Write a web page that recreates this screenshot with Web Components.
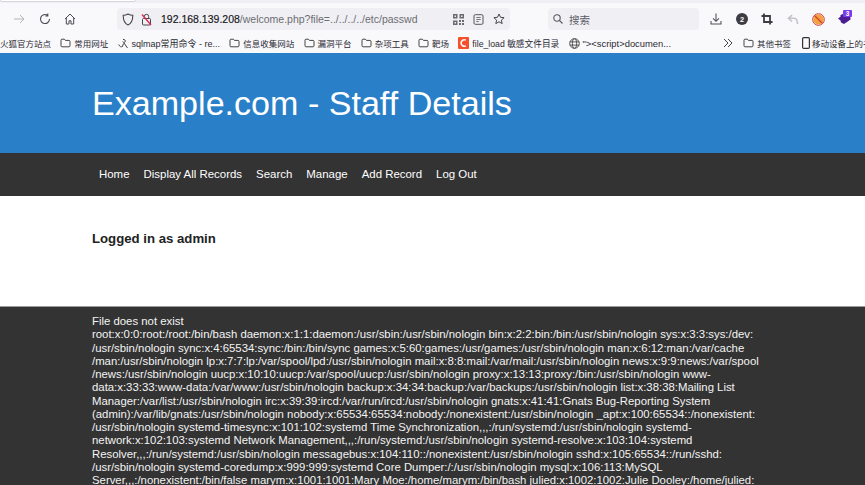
<!DOCTYPE html>
<html lang="zh">
<head>
<meta charset="utf-8">
<title>Example.com - Staff Details</title>
<style>
  html, body { margin: 0; height: 100%; overflow: hidden; background: #fff; }
  body { font-family: "Liberation Sans", Arial, sans-serif; }
</style>
</head>
<body>
<browser-toolbar></browser-toolbar>
<bookmark-bar>
  <bookmark-item data-icon="none">火狐官方站点</bookmark-item>
  <bookmark-item data-icon="folder">常用网址</bookmark-item>
  <bookmark-item data-icon="fox" style="font-size:9px">sqlmap常用命令 - re...</bookmark-item>
  <bookmark-item data-icon="folder">信息收集网站</bookmark-item>
  <bookmark-item data-icon="folder">漏洞平台</bookmark-item>
  <bookmark-item data-icon="folder">杂项工具</bookmark-item>
  <bookmark-item data-icon="folder">靶场</bookmark-item>
  <bookmark-item data-icon="csdn" style="font-size:8.7px">file_load 敏感文件目录</bookmark-item>
  <bookmark-item data-icon="globe" style="font-size:9.4px">"&gt;&lt;script&gt;documen...</bookmark-item>
  <bookmark-item data-icon="chevrons" slot="end" style="margin-right:10px"></bookmark-item>
  <bookmark-item data-icon="folder" slot="end" style="margin-right:11px">其他书签</bookmark-item>
  <bookmark-item data-icon="phone" slot="end" style="gap:2px">移动设备上的书签</bookmark-item>
</bookmark-bar>
<site-header>Example.com - Staff Details</site-header>
<site-nav>
  <a href="#">Home</a>
  <a href="#">Display All Records</a>
  <a href="#">Search</a>
  <a href="#">Manage</a>
  <a href="#">Add Record</a>
  <a href="#">Log Out</a>
</site-nav>
<site-main>Logged in as admin</site-main>
<site-footer>File does not exist<br>root:x:0:0:root:/root:/bin/bash daemon:x:1:1:daemon:/usr/sbin:/usr/sbin/nologin bin:x:2:2:bin:/bin:/usr/sbin/nologin sys:x:3:3:sys:/dev:<br>/usr/sbin/nologin sync:x:4:65534:sync:/bin:/bin/sync games:x:5:60:games:/usr/games:/usr/sbin/nologin man:x:6:12:man:/var/cache<br>/man:/usr/sbin/nologin lp:x:7:7:lp:/var/spool/lpd:/usr/sbin/nologin mail:x:8:8:mail:/var/mail:/usr/sbin/nologin news:x:9:9:news:/var/spool<br>/news:/usr/sbin/nologin uucp:x:10:10:uucp:/var/spool/uucp:/usr/sbin/nologin proxy:x:13:13:proxy:/bin:/usr/sbin/nologin www-<br>data:x:33:33:www-data:/var/www:/usr/sbin/nologin backup:x:34:34:backup:/var/backups:/usr/sbin/nologin list:x:38:38:Mailing List<br>Manager:/var/list:/usr/sbin/nologin irc:x:39:39:ircd:/var/run/ircd:/usr/sbin/nologin gnats:x:41:41:Gnats Bug-Reporting System<br>(admin):/var/lib/gnats:/usr/sbin/nologin nobody:x:65534:65534:nobody:/nonexistent:/usr/sbin/nologin _apt:x:100:65534::/nonexistent:<br>/usr/sbin/nologin systemd-timesync:x:101:102:systemd Time Synchronization,,,:/run/systemd:/usr/sbin/nologin systemd-<br>network:x:102:103:systemd Network Management,,,:/run/systemd:/usr/sbin/nologin systemd-resolve:x:103:104:systemd<br>Resolver,,,:/run/systemd:/usr/sbin/nologin messagebus:x:104:110::/nonexistent:/usr/sbin/nologin sshd:x:105:65534::/run/sshd:<br>/usr/sbin/nologin systemd-coredump:x:999:999:systemd Core Dumper:/:/usr/sbin/nologin mysql:x:106:113:MySQL<br>Server,,,:/nonexistent:/bin/false marym:x:1001:1001:Mary Moe:/home/marym:/bin/bash julied:x:1002:1002:Julie Dooley:/home/julied:</site-footer>

<script>
const ICONS = {
  none: '',
  folder: '<svg width="11" height="10" viewBox="0 0 11 10"><path d="M1 2.2c0-.6.4-1 1-1h2.400l1 1.200H9c.6 0 1 .4 1 1v4.400c0 .6-.4 1-1 1H2c-.6 0-1-.4-1-1z" fill="none" stroke="#444" stroke-width="1"/></svg>',
  fox: '<svg width="11" height="11" viewBox="0 0 11 11"><path d="M.8 6.500c.6 2 2.400 3 4 1.800M5 1.500C6.500 1 8 2.500 7 4 6.300 5 5 4.500 4.800 3.500M6 5l3.500 5M5.500 5.500L4.500 8.300" fill="none" stroke="#444" stroke-width="1"/></svg>',
  csdn: '<svg width="11" height="12" viewBox="0 0 11 12"><rect width="11" height="12" rx="1" fill="#f4512c"/><path d="M7.800 3.200A3.200 3.200 0 1 0 7.800 8.800" fill="none" stroke="#fff" stroke-width="1.500"/></svg>',
  globe: '<svg width="11" height="11" viewBox="0 0 11 11" fill="none" stroke="#444" stroke-width=".9"><circle cx="5.500" cy="5.500" r="4.800"/><ellipse cx="5.500" cy="5.500" rx="2.100" ry="4.800"/><path d="M.9 3.900h9.200M.9 7.100h9.200"/></svg>',
  chevrons: '<svg width="10" height="10" viewBox="0 0 10 10" fill="none" stroke="#444" stroke-width="1"><path d="M1 1l4 4-4 4M5 1l4 4-4 4"/></svg>',
  phone: '<svg width="8" height="12" viewBox="0 0 8 12"><rect x=".6" y=".6" width="6.800" height="10.800" rx="1.200" fill="none" stroke="#333" stroke-width="1.200"/></svg>'
};

class BrowserToolbar extends HTMLElement {
  constructor() {
    super();
    this.attachShadow({ mode: 'open' });
    this.shadowRoot.innerHTML = `
      <style>
        :host { display: block; background: #f9f9fb; height: 33px; box-sizing: border-box; padding-top: 3px; position: relative; overflow: hidden; }
        .tabs { position: absolute; left: 0; right: 0; top: 0; height: 3px; background: #f0f0f4; }
        .tabs::before { content: ""; position: absolute; left: 0; top: -2px; width: 136px; height: 4px; background: #fff; border: 1px solid #d8d8dc; border-radius: 3px; box-sizing: border-box; }
        .row { display: flex; align-items: center; height: 30px; padding-top: 2px; box-sizing: border-box; }
        svg { display: block; flex: none; }
        .nav { display: flex; align-items: center; margin-left: 13px; }
        .url { display: flex; align-items: center; width: 393px; height: 22px; margin-left: 41px; background: #f0f0f4; border-radius: 4px; }
        .addr { margin-left: 9px; font: 10.5px/22px "Liberation Sans", "Noto Sans CJK SC", sans-serif; color: #15141a; white-space: nowrap; -webkit-text-stroke: .15px #15141a; }
        .addr span { color: #6c6c72; -webkit-text-stroke: 0; }
        .url-end { margin-left: auto; display: flex; gap: 9px; align-items: center; margin-right: 5px; }
        .search { display: flex; align-items: center; width: 151px; height: 22px; margin-left: 38px; background: #f0f0f4; border-radius: 4px; box-sizing: border-box; padding-left: 5px; font: 10.5px "Noto Sans CJK SC", sans-serif; color: #5b5b66; gap: 6px; }
        .tools { display: flex; align-items: center; margin-left: 11px; }
      </style>
      <div class="tabs"></div>
      <div class="row">
        <div class="nav">
          <svg width="12" height="12" viewBox="0 0 12 12" fill="none" stroke="#b4b4b8" stroke-width="1"><path d="M1 6h10M7 2l4 4-4 4"/></svg>
          <svg style="margin-left:14px" width="12" height="12" viewBox="0 0 12 12" fill="none" stroke="#4a4a50" stroke-width="1.100"><path d="M10.500 6a4.500 4.500 0 1 1-2-3.700M8.800 .6v2.400h-2.400"/></svg>
          <svg style="margin-left:13px" width="12" height="12" viewBox="0 0 12 12" fill="none" stroke="#4a4a50" stroke-width="1"><path d="M1 6l5-5 5 5M2.300 5v6h2.700V7.800h2V11h2.700V5"/></svg>
        </div>
        <div class="url">
          <svg style="margin-left:5px" width="12" height="13" viewBox="0 0 12 13" fill="none" stroke="#45454b" stroke-width="1.100"><path d="M6 1c1.500 1 3 1.300 4.800 1.300C10.800 7 9.500 10.500 6 12 2.500 10.500 1.200 7 1.200 2.300 3 2.300 4.500 2 6 1z"/></svg>
          <svg style="margin-left:7px" width="11" height="13" viewBox="0 0 11 13"><rect x="1.500" y="5.500" width="8" height="6.500" rx="1" fill="none" stroke="#45454b"/><path d="M3.300 5.500V3.500a2.200 2.200 0 0 1 4.400 0v2" fill="none" stroke="#45454b"/><path d="M1 1.500l9 10.500" stroke="#e22850" stroke-width="1.300"/></svg>
          <div class="addr">192.168.139.208<span>/welcome.php?file=../../../../etc/passwd</span></div>
          <div class="url-end">
            <svg width="11" height="11" viewBox="0 0 11 11"><path d="M0 0h4.500v4.500H0zM6.500 0H11v4.500H6.500zM0 6.500h4.500V11H0zM6 6h2v2H6zM9 6h2v2H9zM6 9h2v2H6zM9 9h2v2H9z" fill="#6a6a70"/><path d="M1.500 1.500h1.500v1.500H1.500zM8 1.500h1.500v1.500H8zM1.500 8h1.500v1.500H1.500z" fill="#f0f0f4"/></svg>
            <svg width="11" height="11" viewBox="0 0 11 11" fill="none" stroke="#55555b"><rect x="1" y=".7" width="9" height="9.600" rx="1.200"/><path d="M3.300 3.500h4.400M3.300 5.500h4.400M3.300 7.500h2.500" stroke-width=".8"/></svg>
            <svg width="12" height="12" viewBox="0 0 12 12" fill="none" stroke="#45454b" stroke-width="1"><path d="M6 1l1.500 3.300 3.600.4-2.700 2.400.8 3.500L6 8.800l-3.200 1.800.8-3.500L.9 4.700l3.600-.4z"/></svg>
          </div>
        </div>
        <div class="search">
          <svg width="10" height="10" viewBox="0 0 10 10" fill="none" stroke="#55555b" stroke-width="1.100"><circle cx="4" cy="4" r="3.200"/><path d="M6.400 6.400L9.500 9.500"/></svg>
          <span>搜索</span>
        </div>
        <div class="tools">
          <svg width="12" height="12" viewBox="0 0 12 12" fill="none" stroke="#55555b" stroke-width="1.100"><path d="M6 .5v7.500M3 5.300L6 8.300l3-3M1 8v3h10V8"/></svg>
          <svg style="margin-left:14px" width="12" height="12" viewBox="0 0 12 12"><circle cx="6" cy="6" r="6" fill="#3c3c42"/><text x="6" y="8.600" text-anchor="middle" font-family="Liberation Sans" font-size="7.500" font-weight="700" fill="#fff">2</text></svg>
          <svg style="margin-left:13px" width="12" height="12" viewBox="0 0 12 12" fill="none" stroke="#3c3c42" stroke-width="1.800"><path d="M3 .5V9h8.500M.5 3H9v8.500"/></svg>
          <svg style="margin-left:14px" width="12" height="11" viewBox="0 0 12 11" fill="none" stroke="#c4c4c8" stroke-width="1.600"><path d="M5 1L1.500 4.300 5 7.500M2 4.300h5c2.500 0 3.500 2 3.500 5.700"/></svg>
          <svg style="margin-left:13px" width="13" height="13" viewBox="0 0 13 13"><circle cx="6.500" cy="6.500" r="5" fill="#f0a23c"/><circle cx="6.500" cy="6.500" r="5.800" fill="none" stroke="#d9362c" stroke-width="1"/><path d="M2.500 2.500l8 8" stroke="#d9362c" stroke-width="1.100"/></svg>
          <svg style="margin:0 0 4px 12px" width="16" height="16" viewBox="0 0 16 16"><path d="M1 9.500l2.500-1.700V6L7 4.500l4 1.500 2.500 2.500v2L10 13l-3 2-3-1.500-.5-2z" fill="#4c1d95"/><rect x="6" y="1" width="9" height="7" rx="1" fill="#7c3aed"/><text x="10.500" y="7" text-anchor="middle" font-family="Liberation Sans" font-size="6.500" font-weight="700" fill="#fff">3</text></svg>
        </div>
      </div>
    `;
  }
}

class BookmarkBar extends HTMLElement {
  constructor() {
    super();
    this.attachShadow({ mode: 'open' });
    this.shadowRoot.innerHTML = `
      <style>
        :host { display: flex; align-items: center; height: 20px; background: #f9f9fb; overflow: hidden; gap: 9.25px; white-space: nowrap; }
        .end { margin-left: auto; display: flex; align-items: center; width: 142px; flex: none; }
      </style>
      <slot></slot>
      <div class="end"><slot name="end"></slot></div>
    `;
  }
}

class BookmarkItem extends HTMLElement {
  constructor() {
    super();
    this.attachShadow({ mode: 'open' });
    this.shadowRoot.innerHTML = `
      <style>
        :host { display: inline-flex; align-items: center; gap: 3px; flex: none; font: 8.5px "Liberation Sans", "Noto Sans CJK SC", sans-serif; color: #2b2a33; }
        svg { display: block; }
      </style>
      <span id="icon"></span>
      <slot></slot>
    `;
  }

  connectedCallback() {
    const icon = this.getAttribute('data-icon') || 'none';
    const holder = this.shadowRoot.querySelector('#icon');
    holder.innerHTML = ICONS[icon];
    if (icon === 'none') holder.remove();
  }
}

class SiteHeader extends HTMLElement {
  constructor() {
    super();
    this.attachShadow({ mode: 'open' });
    this.shadowRoot.innerHTML = `
      <style>
        :host { display: flex; align-items: center; height: 100px; padding-left: 92px; background: #2a7fc9; color: #fff; font-size: 34.1px; }
      </style>
      <slot></slot>
    `;
  }
}

class SiteNav extends HTMLElement {
  constructor() {
    super();
    this.attachShadow({ mode: 'open' });
    this.shadowRoot.innerHTML = `
      <style>
        :host { display: flex; align-items: center; height: 43px; box-sizing: border-box; padding: 0 0 2px 92px; background: #333; font-size: 11.45px; }
        ::slotted(a) { color: #fff; text-decoration: none; padding: 0 7px; }
      </style>
      <slot></slot>
    `;
  }
}

class SiteMain extends HTMLElement {
  constructor() {
    super();
    this.attachShadow({ mode: 'open' });
    this.shadowRoot.innerHTML = `
      <style>
        :host { display: block; height: 110px; box-sizing: border-box; padding: 36px 0 0 92px; background: #fff; color: #222; font-size: 13.2px; font-weight: 700; line-height: 14px; }
      </style>
      <slot></slot>
    `;
  }
}

class SiteFooter extends HTMLElement {
  constructor() {
    super();
    this.attachShadow({ mode: 'open' });
    this.shadowRoot.innerHTML = `
      <style>
        :host { display: block; height: 179px; box-sizing: border-box; overflow: hidden; padding: 8px 0 0 92px; border-top: 1px solid #999; background: #333; color: #f4f4f4; font-size: 11.37px; line-height: 13.25px; white-space: nowrap; }
      </style>
      <slot></slot>
    `;
  }
}

customElements.define('browser-toolbar', BrowserToolbar);
customElements.define('bookmark-bar', BookmarkBar);
customElements.define('bookmark-item', BookmarkItem);
customElements.define('site-header', SiteHeader);
customElements.define('site-nav', SiteNav);
customElements.define('site-main', SiteMain);
customElements.define('site-footer', SiteFooter);
</script>
</body>
</html>
